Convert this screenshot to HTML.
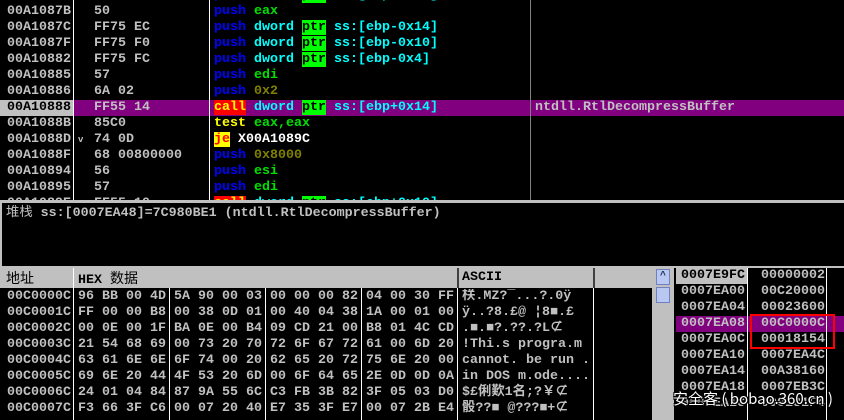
<!DOCTYPE html><html><head><style>
body{margin:0;width:844px;height:420px;background:#000;overflow:hidden;position:relative;font:bold 13.33px "Liberation Mono","Noto Sans CJK SC",monospace;color:#c0c0c0}
div{position:absolute;white-space:pre;line-height:16px}
.b{color:#0000ff}.g{color:#00e000}.c{color:#00ffff}.o{color:#808000}.y{color:#ffff00}.w{color:#fff}
.p{background:#00ff00;color:#000}.r{background:#ff0000;color:#ffff00}.j{background:#ffff00;color:#ff0000}
.v{position:absolute;background:#fff;width:1px}
</style></head><body>
<div style="left:0;top:100px;width:844px;height:16px;background:#800080"></div>
<div style="left:0;top:100px;width:73px;height:16px;background:#c0c0c0"></div>
<div class="v" style="left:73px;top:0;height:200px"></div>
<div class="v" style="left:209px;top:0;height:200px"></div>
<div class="v" style="left:530px;top:0;height:200px;background:#808080"></div>
<div style="left:7px;top:4px">00A1087B
00A1087C
00A1087F
00A10882
00A10885
00A10886
<span style="color:#000">00A10888</span>
00A1088B
00A1088D
00A1088F
00A10894
00A10895
00A1089E</div>
<div style="left:94px;top:4px">50
FF75 EC
FF75 F0
FF75 FC
57
6A 02
FF55 14
85C0
74 0D
68 00800000
56
57
FF55 10</div>
<div style="left:78px;top:132px;font-size:9px">v</div>
<div style="left:214px;top:-12px"><span class="b">push</span> <span class="c">dword</span> <span class="p">ptr</span> <span class="c">ss:[ebp-0x18]</span>
<span class="b">push</span> <span class="g">eax</span>
<span class="b">push</span> <span class="c">dword</span> <span class="p">ptr</span> <span class="c">ss:[ebp-0x14]</span>
<span class="b">push</span> <span class="c">dword</span> <span class="p">ptr</span> <span class="c">ss:[ebp-0x10]</span>
<span class="b">push</span> <span class="c">dword</span> <span class="p">ptr</span> <span class="c">ss:[ebp-0x4]</span>
<span class="b">push</span> <span class="g">edi</span>
<span class="b">push</span> <span class="o">0x2</span>
<span class="r">call</span> <span class="c">dword</span> <span class="p">ptr</span> <span class="c">ss:[ebp+0x14]</span>
<span class="y">test</span> <span class="g">eax,eax</span>
<span class="j">je</span> <span class="w">X00A1089C</span>
<span class="b">push</span> <span class="o">0x8000</span>
<span class="b">push</span> <span class="g">esi</span>
<span class="b">push</span> <span class="g">edi</span>
<span class="r">call</span> <span class="c">dword</span> <span class="p">ptr</span> <span class="c">ss:[ebp+0x10]</span></div>
<div style="left:535px;top:100px">ntdll.RtlDecompressBuffer</div>
<div style="left:0;top:200px;width:844px;height:68px;background:#000;border-top:3px solid #c0c0c0;box-sizing:border-box"></div>
<div style="left:0;top:200px;width:2px;height:68px;background:#c0c0c0"></div>
<div style="left:6px;top:203px"><span style="font-weight:normal;font-family:'Noto Sans CJK SC',sans-serif">堆栈</span> ss:[0007EA48]=7C980BE1 (ntdll.RtlDecompressBuffer)</div>
<div style="left:0;top:266px;width:844px;height:2px;background:#c0c0c0"></div>
<div style="left:0;top:268px;width:652px;height:20px;background:#c0c0c0"></div>
<div style="left:73px;top:268px;width:1px;height:20px;background:#fff"></div>
<div style="left:457px;top:268px;width:2px;height:20px;background:#404040"></div>
<div style="left:593px;top:268px;width:2px;height:20px;background:#404040"></div>
<div style="left:6px;top:270px;color:#000;font-weight:normal;font-family:'Noto Sans CJK SC',sans-serif;font-size:14px">地址</div>
<div style="left:78px;top:270px;color:#000">HEX <span style="font-weight:normal;font-family:'Noto Sans CJK SC',sans-serif;font-size:14px">数据</span></div>
<div style="left:462px;top:270px;color:#000">ASCII</div>
<div class="v" style="left:73px;top:288px;height:132px"></div>
<div class="v" style="left:169px;top:288px;height:132px"></div>
<div class="v" style="left:265px;top:288px;height:132px"></div>
<div class="v" style="left:361px;top:288px;height:132px"></div>
<div class="v" style="left:457px;top:288px;height:132px"></div>
<div class="v" style="left:593px;top:288px;height:132px"></div>
<div style="left:7px;top:289px">00C0000C
00C0001C
00C0002C
00C0003C
00C0004C
00C0005C
00C0006C
00C0007C</div>
<div style="left:78px;top:289px">96 BB 00 4D
FF 00 00 B8
00 0E 00 1F
21 54 68 69
63 61 6E 6E
69 6E 20 44
24 01 04 84
F3 66 3F C6</div>
<div style="left:174px;top:289px">5A 90 00 03
00 38 0D 01
BA 0E 00 B4
00 73 20 70
6F 74 00 20
4F 53 20 6D
87 9A 55 6C
00 07 20 40</div>
<div style="left:270px;top:289px">00 00 00 82
00 40 04 38
09 CD 21 00
72 6F 67 72
62 65 20 72
00 6F 64 65
C3 FB 3B 82
E7 35 3F E7</div>
<div style="left:366px;top:289px">04 00 30 FF
1A 00 01 00
B8 01 4C CD
61 00 6D 20
75 6E 20 00
2E 0D 0D 0A
3F 05 03 D0
00 07 2B E4</div>
<div style="left:462px;top:289px;width:130px;overflow:hidden">栚.MZ?‾...?.0ÿ
ÿ..?8.£@ ¦8■.£
.■.■?.??.?L⊄
!Thi.s progra.m
cannot. be run .
in DOS m.ode....
$£俐歎1名;?￥⊄
骰??■ @???■+⊄</div>
<div style="left:652px;top:268px;width:22px;height:152px;background:#c0c0c0"></div>
<div style="left:656px;top:269px;width:14px;height:16px;background:#b8c8f0;border:1px solid #7080c0;box-sizing:border-box;color:#203060;font-size:10px;line-height:14px;text-align:center">^</div>
<div style="left:656px;top:287px;width:14px;height:16px;background:#b8c8f0;border:1px solid #7080c0;box-sizing:border-box"></div>
<div style="left:676px;top:268px;width:71px;height:16px;background:#c0c0c0"></div>
<div style="left:676px;top:316px;width:168px;height:16px;background:#800080"></div>
<div class="v" style="left:747px;top:268px;height:152px"></div>
<div class="v" style="left:826px;top:268px;height:152px"></div>
<div style="left:681px;top:268px"><span style="color:#000">0007E9FC</span>
0007EA00
0007EA04
0007EA08
0007EA0C
0007EA10
0007EA14
0007EA18
0007EA1C</div>
<div style="left:761px;top:268px">00000002
00C20000
00023600
00C0000C
00018154
0007EA4C
00A38160
0007EB3C
000181F4</div>
<div style="left:750px;top:314px;width:85px;height:35px;border:2px solid #f00;box-sizing:border-box"></div>
<div style="left:673px;top:388px;color:#fff;font:15px 'Noto Sans CJK SC',sans-serif;text-shadow:1px 1px 0 #000,-1px -1px 0 #000,1px -1px 0 #000,-1px 1px 0 #000">安全客 ( bobao.360.cn )</div>
</body></html>
